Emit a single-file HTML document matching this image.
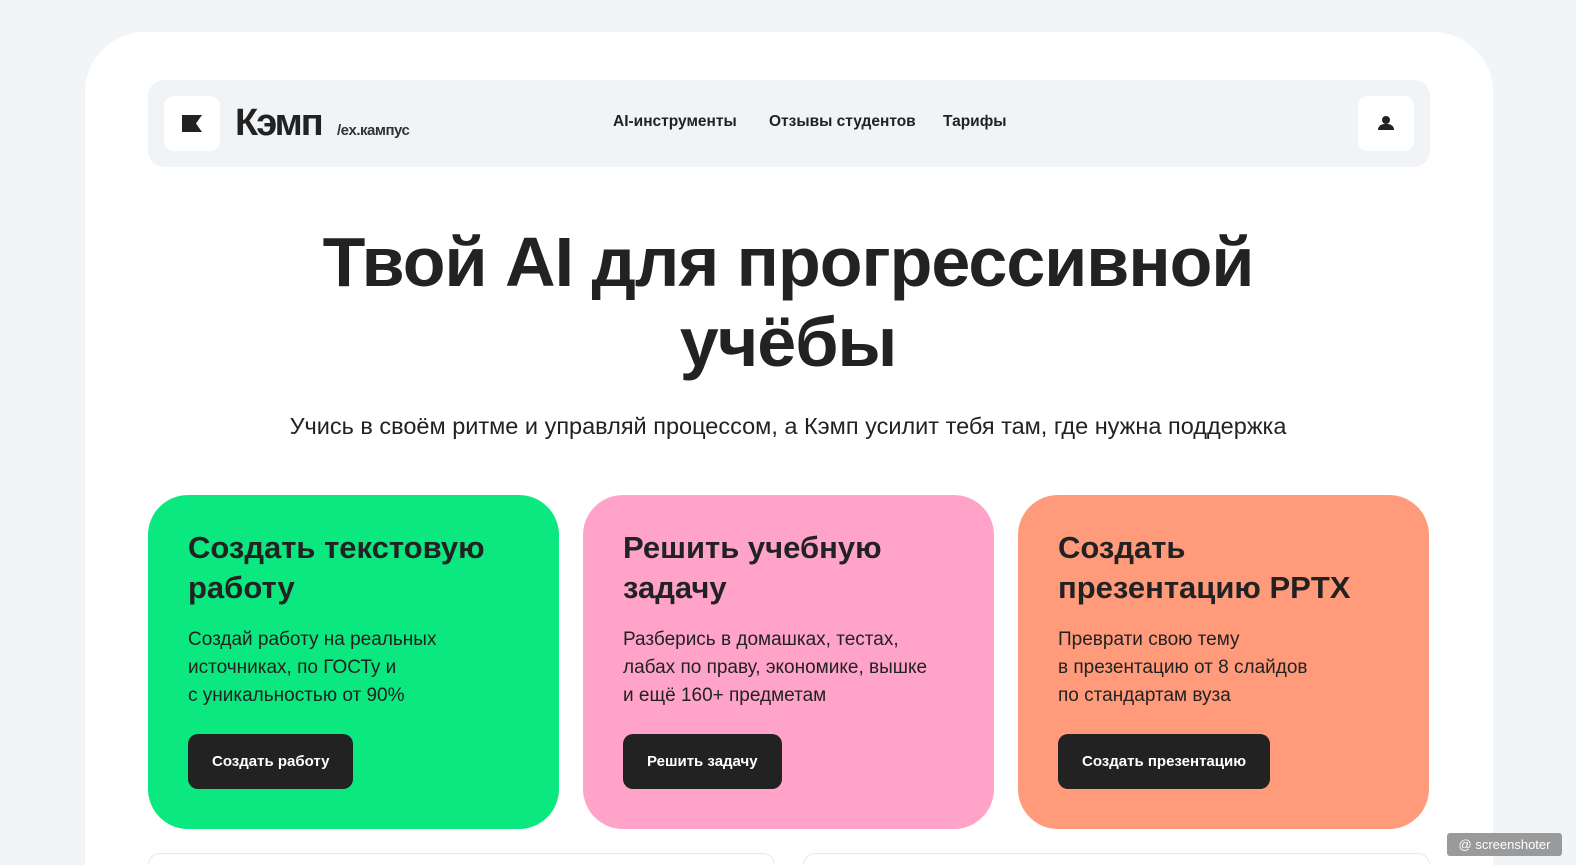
<!DOCTYPE html>
<html><head><meta charset="utf-8"><style>
*{margin:0;padding:0;box-sizing:border-box}
html,body{width:1576px;height:865px;overflow:hidden}
body{background:#f1f5f8;font-family:"Liberation Sans",sans-serif;color:#222;position:relative}
.wrap{position:absolute;left:85px;top:32px;width:1408px;height:833px;background:#fff;border-radius:60px 60px 0 0}
.hdr{position:absolute;left:148px;top:80px;width:1282px;height:87px;background:#f1f4f7;border-radius:16px}
.lb{position:absolute;left:16px;top:16px;width:56px;height:55px;background:#fff;border-radius:10px}
.lb i{position:absolute;left:18px;top:19px;width:20px;height:17px;background:#222;clip-path:polygon(0 0,100% 0,70% 50%,100% 100%,0 100%)}
.logo{position:absolute;left:87px;top:22px;font-size:38px;font-weight:700;letter-spacing:-2px}
.ex{position:absolute;left:189px;top:42px;font-size:15px;font-weight:700;color:#333;letter-spacing:-0.5px}
.nav{position:absolute;top:33px;font-size:15.5px;font-weight:700}
.pb{position:absolute;right:16px;top:16px;width:56px;height:55px;background:#fff;border-radius:10px}
h1{position:absolute;left:0;width:1576px;top:222px;text-align:center;font-size:70px;line-height:80px;font-weight:700;letter-spacing:-1px}
.sub{position:absolute;left:0;width:1576px;top:413px;text-align:center;font-size:23.5px}
.card{position:absolute;top:495px;width:411px;height:334px;border-radius:40px;padding:33px 40px}
.card h2{font-size:31px;line-height:40px;font-weight:700;margin-top:0}
.card p{font-size:19px;line-height:28px;margin-top:18px}
.btn{position:absolute;left:40px;top:239px;height:55px;background:#222;color:#fff;border-radius:10px;font-size:15px;font-weight:700;line-height:55px;padding:0 24px}
.bot{position:absolute;top:853px;height:40px;border:1px solid #e6e9ec;border-radius:30px}
.ss{position:absolute;left:1447px;top:833px;width:115px;height:23px;background:#9a9a9a;border-radius:3px;color:#fff;font-size:13px;line-height:23px;text-align:center}
</style></head><body>
<div class="wrap"></div>
<div class="hdr">
<div class="lb"><i></i></div>
<div class="logo">Кэмп</div>
<div class="ex">/ex.кампус</div>
<div class="nav" style="left:465px">AI-инструменты</div>
<div class="nav" style="left:621px">Отзывы студентов</div>
<div class="nav" style="left:795px">Тарифы</div>
<div class="pb"><svg width="56" height="55" viewBox="0 0 56 55"><circle cx="28" cy="24" r="4" fill="#222"/><path d="M20 33c1-4 4-5 8-5s7 1 8 5v1H20z" fill="#222"/></svg></div>
</div>
<h1>Твой AI для прогрессивной<br>учёбы</h1>
<div class="sub">Учись в своём ритме и управляй процессом, а Кэмп усилит тебя там, где нужна поддержка</div>
<div class="card" style="left:148px;background:#0ae87f"><h2>Создать текстовую<br>работу</h2><p>Создай работу на реальных<br>источниках, по ГОСТу и<br>с уникальностью от 90%</p><div class="btn">Создать работу</div></div>
<div class="card" style="left:583px;background:#ffa3c9"><h2>Решить учебную<br>задачу</h2><p>Разберись в домашках, тестах,<br>лабах по праву, экономике, вышке<br>и ещё 160+ предметам</p><div class="btn">Решить задачу</div></div>
<div class="card" style="left:1018px;background:#ff9b7b"><h2>Создать<br>презентацию PPTX</h2><p>Преврати свою тему<br>в презентацию от 8 слайдов<br>по стандартам вуза</p><div class="btn">Создать презентацию</div></div>
<div class="bot" style="left:148px;width:627px;height:12px;border-bottom:none;border-radius:30px 30px 0 0"></div>
<div class="bot" style="left:803px;width:627px;height:12px;border-bottom:none;border-radius:30px 30px 0 0"></div>
<div class="ss">@ screenshoter</div>
</body></html>
